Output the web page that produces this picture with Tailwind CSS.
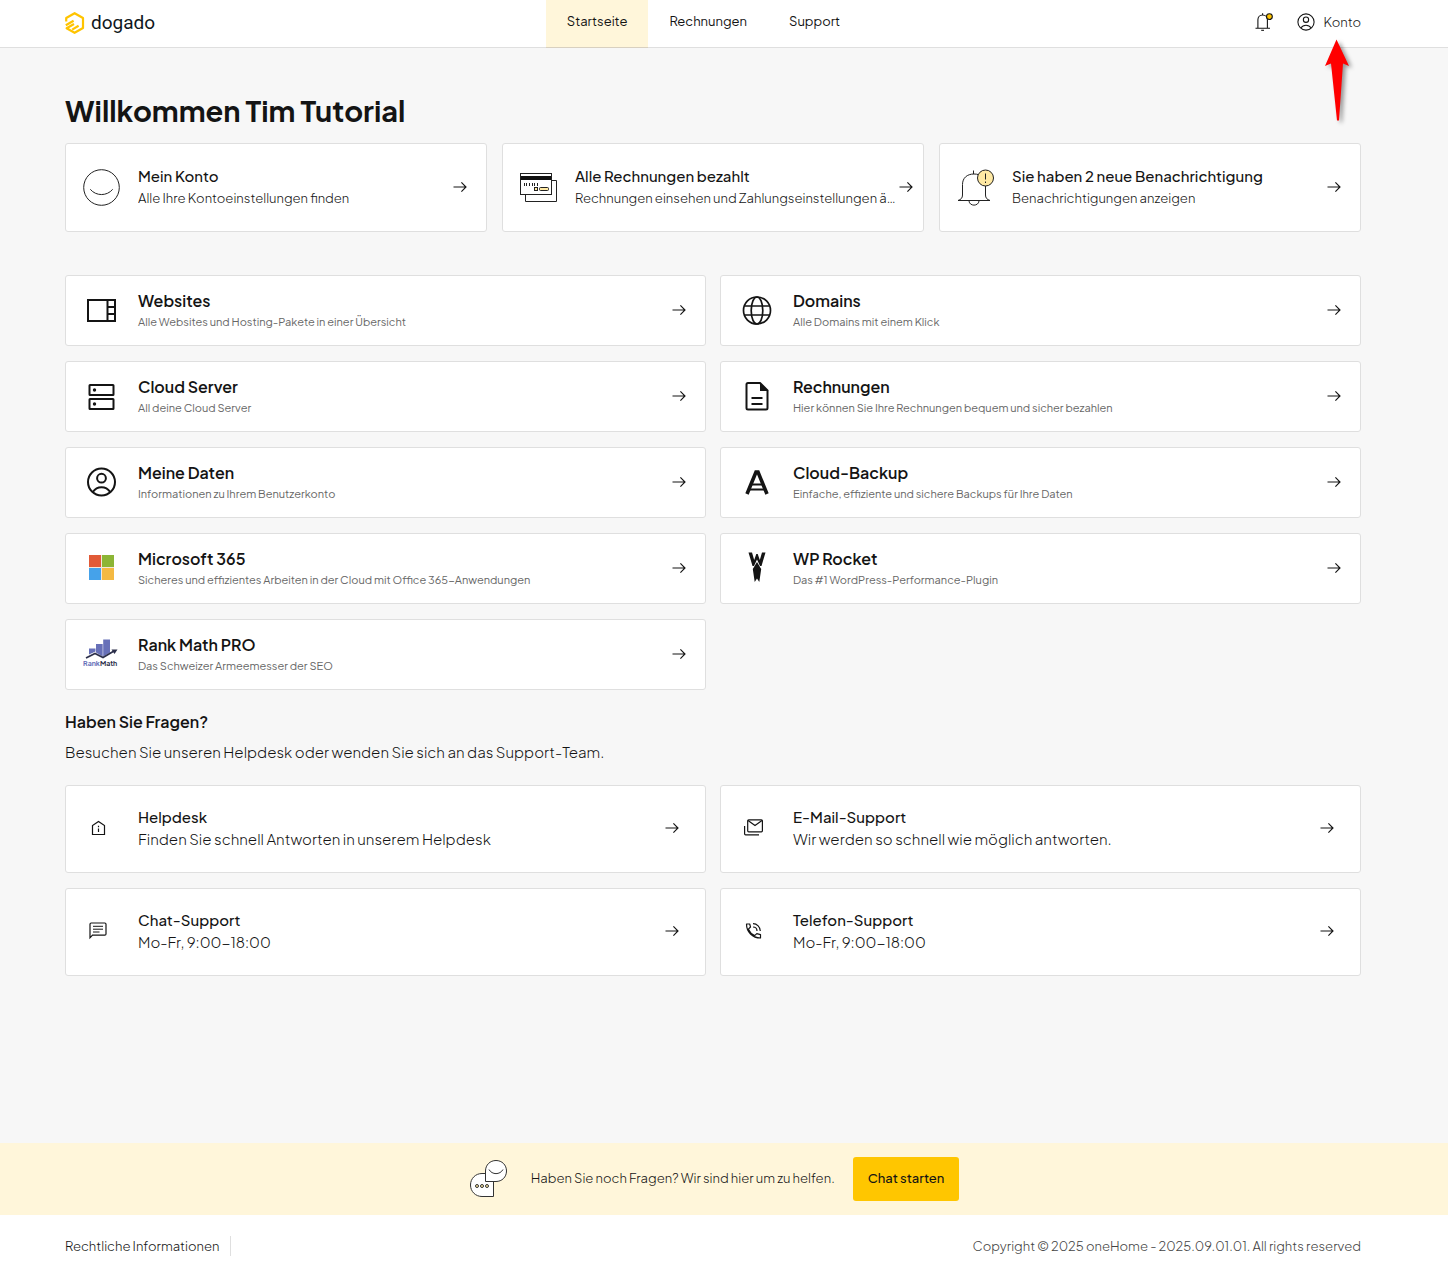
<!DOCTYPE html>
<html lang="de">

<head>
    <meta charset="UTF-8" />
    <meta name="viewport" content="width=device-width, initial-scale=1.0" />
    <title>Startseite - oneHome</title>
    <script src="https://cdn.jsdelivr.net/npm/@tailwindcss/browser@4"></script>
</head>

<body class="bg-[#f7f7f7] text-[#141414] min-h-screen flex flex-col font-['Plus_Jakarta_Sans','Inter',sans-serif]">

    <!-- Icons, die mehrfach vorkommen -->
    <svg class="hidden" aria-hidden="true">
        <symbol id="arrow" viewBox="0 0 14 14">
            <path d="M0.5 7H13M8.4 2.4L13 7L8.4 11.6" fill="none" stroke="currentColor" stroke-width="1.15" />
        </symbol>
        <symbol id="user" viewBox="0 0 30 30">
            <circle cx="15" cy="15" r="13.5" />
            <circle cx="15" cy="11.2" r="4.4" />
            <path d="M6.3 25C8.5 21.8 11.5 20.3 15 20.3S21.5 21.8 23.7 25" />
        </symbol>
    </svg>

    <!-- Kopfzeile -->
    <header class="bg-white border-b border-[#dfdfdf] h-12 pl-[65px] pr-[87px] grid grid-cols-[1fr_auto_1fr]">
        <a href="#" class="flex items-center gap-1.5 pb-0.5 font-['Roboto',sans-serif] text-[19px]/[24px] text-[#0f1720]">
            <svg class="w-5 h-6" viewBox="0 0 20 24" fill="none" stroke="#ffc400" stroke-width="2.2">
                <path d="M1.2 10.5V7L9.6 2.2L18 7V17L9.6 21.8L1.6 17.2L9 13" stroke-linejoin="round" />
                <path d="M0.8 14.2L8.6 9.8" />
                <path d="M7.2 18.6L13.6 14.8" />
            </svg>
            dogado
        </a>
        <nav class="flex mr-[19px] text-[13px]/[43px]">
            <a href="#" class="bg-[#fff6da] px-[21px] border-b border-[#d8d0c0] -mb-px">Startseite</a>
            <a href="#" class="px-[21px]">Rechnungen</a>
            <a href="#" class="px-[21px]">Support</a>
        </nav>
        <div class="flex items-center justify-end gap-6 pb-1">
            <button type="button" aria-label="Benachrichtigungen" class="cursor-pointer">
                <svg class="w-[18px] h-5" viewBox="0 0 18 20" fill="none" stroke="#141414" stroke-width="1.1">
                    <path d="M0.5 16.3H15M2.9 16V7.8C2.9 5 4.8 3 7.6 3S12.4 5 12.4 7.8V16M7.6 1.2V3" />
                    <path d="M6.2 18.3H9" />
                    <circle cx="14.4" cy="4.6" r="2.9" fill="#ffc400" />
                </svg>
            </button>
            <a href="#" class="flex items-center gap-2 text-[13px]/[20px] font-light">
                <svg class="w-[18px] h-[18px]" fill="none" stroke="#141414" stroke-width="1.8">
                    <use href="#user" />
                </svg>
                Konto
            </a>
        </div>
    </header>

    <!-- Markierung unter "Konto" -->
    <svg class="absolute right-[92px] top-[36px] w-[40px] h-[92px]" viewBox="0 0 40 92" aria-hidden="true">
        <path d="M20.5 3.5L33 30L27 27.5L23 84.5H21L15 27.5L9 30Z" fill="#ff0000" class="drop-shadow-[3px_2px_2px_rgba(0,0,0,0.4)]" />
    </svg>

    <main class="flex-1 pl-[65px] pr-[87px]">
        <h1 class="pt-[42px] mb-[13px] text-[29px]/[40px] font-bold">Willkommen Tim Tutorial</h1>

        <!-- Schnellzugriff -->
        <section class="grid grid-cols-3 gap-[15px]">
            <a href="#" class="flex items-center h-[89px] pl-[17px] pr-[19px] pb-px bg-white border border-[#dfdfdf] rounded-[3px]">
                <svg class="shrink-0 w-[37px] h-[37px]" viewBox="0 0 37 37" fill="none" stroke="#222">
                    <circle cx="18.5" cy="18.5" r="17.8" />
                    <path d="M7.3 20.3C13 27.3 24 27.3 29.7 20.3" />
                </svg>
                <div class="flex-1 min-w-0 ml-[18px]">
                    <h2 class="text-[15px]/[22px] font-medium">Mein Konto</h2>
                    <p class="text-[13px]/[22px] font-light truncate">Alle Ihre Kontoeinstellungen finden</p>
                </div>
                <svg class="shrink-0 ml-1 w-3.5 h-3.5"><use href="#arrow" /></svg>
            </a>
            <a href="#" class="flex items-center h-[89px] pl-[17px] pr-2.5 pb-px bg-white border border-[#dfdfdf] rounded-[3px]">
                <svg class="shrink-0 w-[37px] h-[37px]" viewBox="0 0 37 37" fill="none" stroke="#222">
                    <path d="M32 11.5H36.5V32.5H5.5V25.5" />
                    <rect x="0.5" y="4.5" width="31" height="21" fill="#fff" />
                    <path d="M1 9H31" stroke="#111" stroke-width="4" />
                    <path d="M4.5 14V17M6.5 14V17M9.5 14V17M12.5 14V17M14.5 14V17M17.5 14V17" />
                    <rect x="14.5" y="18.5" width="3" height="3" fill="#ffe9a3" />
                    <rect x="19.5" y="18.5" width="9" height="3" rx="1" fill="#ffe9a3" />
                </svg>
                <div class="flex-1 min-w-0 ml-[18px]">
                    <h2 class="text-[15px]/[22px] font-medium">Alle Rechnungen bezahlt</h2>
                    <p class="text-[13px]/[22px] font-light truncate">Rechnungen einsehen und Zahlungseinstellungen ändern</p>
                </div>
                <svg class="shrink-0 w-3.5 h-3.5"><use href="#arrow" /></svg>
            </a>
            <a href="#" class="flex items-center h-[89px] pl-[17px] pr-[19px] pb-px bg-white border border-[#dfdfdf] rounded-[3px]">
                <svg class="shrink-0 w-[37px] h-[37px]" viewBox="0 0 37 37" fill="none" stroke="#222">
                    <path d="M1 31.5H33M1 31.5C4 30.5 5.5 29 5.5 26V15.5C5.5 9 10 5 17 5S28.5 9 28.5 15.5V26C28.5 29 30 30.5 33 31.5M16.5 1.5V5" />
                    <path d="M12 32C12.5 37.5 21.5 37.5 22 32" />
                    <circle cx="28.5" cy="9" r="8" fill="#ffe9a3" />
                    <path d="M28.5 4.5V10.5M28.5 12.5V14" />
                </svg>
                <div class="flex-1 min-w-0 ml-[18px]">
                    <h2 class="text-[15px]/[22px] font-medium">Sie haben 2 neue Benachrichtigung</h2>
                    <p class="text-[13px]/[22px] font-light truncate">Benachrichtigungen anzeigen</p>
                </div>
                <svg class="shrink-0 ml-1 w-3.5 h-3.5"><use href="#arrow" /></svg>
            </a>
        </section>

        <!-- Produkte -->
        <section class="mt-[43px] grid grid-cols-2 gap-x-3.5 gap-y-[15px]">
            <a href="#" class="flex items-center h-[71px] pl-[17px] pr-[19px] pb-px bg-white border border-[#dfdfdf] rounded-[3px]">
                <svg class="shrink-0 w-[37px] h-[37px]" viewBox="0 0 37 37" fill="none" stroke="#141414" stroke-width="2">
                    <path d="M5 8H32V29H5ZM24.5 8V29M25 15H32M25 22H32" />
                </svg>
                <div class="flex-1 min-w-0 ml-[18px] pt-0.5">
                    <h2 class="text-[16px]/[20px] font-semibold">Websites</h2>
                    <p class="mt-px text-[11px]/[20px] text-[#666]">Alle Websites und Hosting-Pakete in einer Übersicht</p>
                </div>
                <svg class="shrink-0 ml-1 w-3.5 h-3.5"><use href="#arrow" /></svg>
            </a>
            <a href="#" class="flex items-center h-[71px] pl-[17px] pr-[19px] pb-px bg-white border border-[#dfdfdf] rounded-[3px]">
                <svg class="shrink-0 w-[37px] h-[37px]" viewBox="0 0 37 37" fill="none" stroke="#141414" stroke-width="1.7">
                    <circle cx="19" cy="18.5" r="13.5" />
                    <ellipse cx="19" cy="18.5" rx="5.8" ry="13.5" />
                    <path d="M6.5 14H31.5M6.5 23H31.5" />
                </svg>
                <div class="flex-1 min-w-0 ml-[18px] pt-0.5">
                    <h2 class="text-[16px]/[20px] font-semibold">Domains</h2>
                    <p class="mt-px text-[11px]/[20px] text-[#666]">Alle Domains mit einem Klick</p>
                </div>
                <svg class="shrink-0 ml-1 w-3.5 h-3.5"><use href="#arrow" /></svg>
            </a>
            <a href="#" class="flex items-center h-[71px] pl-[17px] pr-[19px] pb-px bg-white border border-[#dfdfdf] rounded-[3px]">
                <svg class="shrink-0 w-[37px] h-[37px]" viewBox="0 0 37 37" fill="none" stroke="#141414" stroke-width="2">
                    <rect x="6.5" y="7" width="24" height="10" rx="0.5" />
                    <rect x="6.5" y="21" width="24" height="10" rx="0.5" />
                    <circle cx="11.5" cy="12" r="1.7" fill="#141414" stroke="none" />
                    <circle cx="11.5" cy="26" r="1.7" fill="#141414" stroke="none" />
                </svg>
                <div class="flex-1 min-w-0 ml-[18px] pt-0.5">
                    <h2 class="text-[16px]/[20px] font-semibold">Cloud Server</h2>
                    <p class="mt-px text-[11px]/[20px] text-[#666]">All deine Cloud Server</p>
                </div>
                <svg class="shrink-0 ml-1 w-3.5 h-3.5"><use href="#arrow" /></svg>
            </a>
            <a href="#" class="flex items-center h-[71px] pl-[17px] pr-[19px] pb-px bg-white border border-[#dfdfdf] rounded-[3px]">
                <svg class="shrink-0 w-[37px] h-[37px]" viewBox="0 0 37 37" fill="none" stroke="#141414" stroke-width="2">
                    <path d="M22 5H10C9.2 5 8.5 5.7 8.5 6.5V30C8.5 30.800 9.2 31.500 10 31.500H28C28.800 31.500 29.500 30.800 29.500 30V12.500Z" stroke-linejoin="round" />
                    <path d="M22 4.500V13H30.500Z" fill="#141414" stroke="none" />
                    <path d="M13.500 20H24.500M13.500 26H24.500" />
                </svg>
                <div class="flex-1 min-w-0 ml-[18px] pt-0.5">
                    <h2 class="text-[16px]/[20px] font-semibold">Rechnungen</h2>
                    <p class="mt-px text-[11px]/[20px] text-[#666]">Hier können Sie Ihre Rechnungen bequem und sicher bezahlen</p>
                </div>
                <svg class="shrink-0 ml-1 w-3.5 h-3.5"><use href="#arrow" /></svg>
            </a>
            <a href="#" class="flex items-center h-[71px] pl-[17px] pr-[19px] pb-px bg-white border border-[#dfdfdf] rounded-[3px]">
                <svg class="shrink-0 w-[37px] h-[30px]" fill="none" stroke="#141414" stroke-width="2">
                    <use href="#user" />
                </svg>
                <div class="flex-1 min-w-0 ml-[18px] pt-0.5">
                    <h2 class="text-[16px]/[20px] font-semibold">Meine Daten</h2>
                    <p class="mt-px text-[11px]/[20px] text-[#666]">Informationen zu Ihrem Benutzerkonto</p>
                </div>
                <svg class="shrink-0 ml-1 w-3.5 h-3.5"><use href="#arrow" /></svg>
            </a>
            <a href="#" class="flex items-center h-[71px] pl-[17px] pr-[19px] pb-px bg-white border border-[#dfdfdf] rounded-[3px]">
                <!-- Logo mit doppeltem Querstrich -->
                <svg class="shrink-0 w-[37px] h-[37px]" viewBox="0 0 37 37" fill="none" stroke="#141414">
                    <path d="M9 30L18 8H20L29 30" stroke-width="3.6" />
                    <path d="M12.5 20.5H25.5M10.5 25.5H27.5" stroke-width="2" />
                </svg>
                <div class="flex-1 min-w-0 ml-[18px] pt-0.5">
                    <h2 class="text-[16px]/[20px] font-semibold">Cloud-Backup</h2>
                    <p class="mt-px text-[11px]/[20px] text-[#666]">Einfache, effiziente und sichere Backups für Ihre Daten</p>
                </div>
                <svg class="shrink-0 ml-1 w-3.5 h-3.5"><use href="#arrow" /></svg>
            </a>
            <a href="#" class="flex items-center h-[71px] pl-[17px] pr-[19px] pb-px bg-white border border-[#dfdfdf] rounded-[3px]">
                <svg class="shrink-0 w-[37px] h-[37px]" viewBox="0 0 37 37">
                    <rect x="6" y="5" width="25" height="25" fill="#f3e6d8" />
                    <rect x="6" y="5" width="12" height="12" fill="#e15a37" />
                    <rect x="19" y="5" width="12" height="12" fill="#8cb535" />
                    <rect x="6" y="18" width="12" height="12" fill="#45a2ea" />
                    <rect x="19" y="18" width="12" height="12" fill="#f4b942" />
                </svg>
                <div class="flex-1 min-w-0 ml-[18px] pt-0.5">
                    <h2 class="text-[16px]/[20px] font-semibold">Microsoft 365</h2>
                    <p class="mt-px text-[11px]/[20px] text-[#666]">Sicheres und effizientes Arbeiten in der Cloud mit Office 365-Anwendungen</p>
                </div>
                <svg class="shrink-0 ml-1 w-3.5 h-3.5"><use href="#arrow" /></svg>
            </a>
            <a href="#" class="flex items-center h-[71px] pl-[17px] pr-[19px] pb-px bg-white border border-[#dfdfdf] rounded-[3px]">
                <svg class="shrink-0 w-[37px] h-[37px]" viewBox="0 0 37 37" fill="#141414">
                    <path d="M10.5 2.5H14L16.2 10L18.3 4H19.7L21.8 10L24 2.5H27.5L23.5 16H22L19 9.5L16 16H14.5Z" />
                    <path d="M19 12L23.2 19L21.3 32L19 28.5L16.7 32L14.8 19Z" />
                </svg>
                <div class="flex-1 min-w-0 ml-[18px] pt-0.5">
                    <h2 class="text-[16px]/[20px] font-semibold">WP Rocket</h2>
                    <p class="mt-px text-[11px]/[20px] text-[#666]">Das #1 WordPress-Performance-Plugin</p>
                </div>
                <svg class="shrink-0 ml-1 w-3.5 h-3.5"><use href="#arrow" /></svg>
            </a>
            <a href="#" class="flex items-center h-[71px] pl-[17px] pr-[19px] pb-px bg-white border border-[#dfdfdf] rounded-[3px]">
                <svg class="shrink-0 w-[37px] h-[37px]" viewBox="0 0 37 37">
                    <path d="M6 12.5H12.5V15.5L6 18.5ZM13 8H19.7V20.5L13 16.5ZM20.2 3.5H27V16.5L20.2 20.5Z" fill="#6770b8" />
                    <path d="M3 22L12 17.5L20 21.5L31 15" fill="none" stroke="#2c2f4a" stroke-width="1.7" />
                    <path d="M28.5 13.5L34.5 13.5L31.5 18Z" fill="#2c2f4a" />
                    <text x="0" y="30" font-size="7" font-weight="700" fill="#2c2f4a"><tspan fill="#6770b8">Rank</tspan>Math</text>
                </svg>
                <div class="flex-1 min-w-0 ml-[18px] pt-0.5">
                    <h2 class="text-[16px]/[20px] font-semibold">Rank Math PRO</h2>
                    <p class="mt-px text-[11px]/[20px] text-[#666]">Das Schweizer Armeemesser der SEO</p>
                </div>
                <svg class="shrink-0 ml-1 w-3.5 h-3.5"><use href="#arrow" /></svg>
            </a>
        </section>

        <!-- Support -->
        <section class="mt-5">
            <h2 class="text-[16px]/[24px] font-semibold">Haben Sie Fragen?</h2>
            <p class="mt-1.5 text-[15px]/[24px] font-light">Besuchen Sie unseren Helpdesk oder wenden Sie sich an das Support-Team.</p>
            <div class="mt-[21px] grid grid-cols-2 gap-x-3.5 gap-y-[15px]">
                <a href="#" class="flex items-center h-[88px] pl-[23px] pr-[26px] pb-0.5 bg-white border border-[#dfdfdf] rounded-[3px]">
                    <svg class="shrink-0 w-[18px] h-[18px]" viewBox="0 0 18 18" fill="none" stroke="#141414" stroke-width="1.2">
                        <path d="M3.5 15.5V6.5L9.5 2.5L15.5 6.5V15.5Z" />
                        <path d="M9.5 9.5V13M9.5 6.8V8.2" />
                    </svg>
                    <div class="flex-1 min-w-0 ml-[31px]">
                        <h3 class="text-[15px]/[22px] font-medium">Helpdesk</h3>
                        <p class="text-[15px]/[22px] font-light">Finden Sie schnell Antworten in unserem Helpdesk</p>
                    </div>
                    <svg class="shrink-0 w-3.5 h-3.5"><use href="#arrow" /></svg>
                </a>
                <a href="#" class="flex items-center h-[88px] pl-[23px] pr-[26px] pb-0.5 bg-white border border-[#dfdfdf] rounded-[3px]">
                    <svg class="shrink-0 w-[19px] h-[18px]" viewBox="0 0 19 18" fill="none" stroke="#141414" stroke-width="1.2">
                        <rect x="3.7" y="0.8" width="14.7" height="12" rx="1" />
                        <path d="M4 1.5L11 6.5L18 1.5M0.6 7V14.8C0.6 15.4 1 15.8 1.6 15.8H15" />
                    </svg>
                    <div class="flex-1 min-w-0 ml-[30px]">
                        <h3 class="text-[15px]/[22px] font-medium">E-Mail-Support</h3>
                        <p class="text-[15px]/[22px] font-light">Wir werden so schnell wie möglich antworten.</p>
                    </div>
                    <svg class="shrink-0 w-3.5 h-3.5"><use href="#arrow" /></svg>
                </a>
                <a href="#" class="flex items-center h-[88px] pl-[23px] pr-[26px] pb-0.5 bg-white border border-[#dfdfdf] rounded-[3px]">
                    <svg class="shrink-0 w-[18px] h-[18px]" viewBox="0 0 18 18" fill="none" stroke="#141414" stroke-width="1.2">
                        <path d="M1 15.8V2.2C1 1.5 1.5 1 2.2 1H15.8C16.5 1 17 1.5 17 2.2V12C17 12.7 16.5 13.2 15.8 13.2H3.5Z" />
                        <path d="M4 4.3H14M4 7.2H14M4 10H10.5" stroke-width="1" />
                    </svg>
                    <div class="flex-1 min-w-0 ml-[31px]">
                        <h3 class="text-[15px]/[22px] font-medium">Chat-Support</h3>
                        <p class="text-[15px]/[22px] font-light">Mo-Fr, 9:00-18:00</p>
                    </div>
                    <svg class="shrink-0 w-3.5 h-3.5"><use href="#arrow" /></svg>
                </a>
                <a href="#" class="flex items-center h-[88px] pl-[23px] pr-[26px] pb-0.5 bg-white border border-[#dfdfdf] rounded-[3px]">
                    <svg class="shrink-0 w-[18px] h-[18px]" viewBox="0 0 18 18" fill="none" stroke="#141414" stroke-width="1.2">
                        <path d="M2.5 2H5.7L6.5 5L4.4 7.2C5.6 10 7.8 12.2 10.6 13.6L12.8 11.6L16.5 12.6V16C8.5 16 2.5 10 2.5 2Z" stroke-linejoin="round" />
                        <path d="M9 1.7C13 1.7 16.3 5 16.3 9M9 5C11.3 5 13 6.7 13 9" />
                    </svg>
                    <div class="flex-1 min-w-0 ml-[31px]">
                        <h3 class="text-[15px]/[22px] font-medium">Telefon-Support</h3>
                        <p class="text-[15px]/[22px] font-light">Mo-Fr, 9:00-18:00</p>
                    </div>
                    <svg class="shrink-0 w-3.5 h-3.5"><use href="#arrow" /></svg>
                </a>
            </div>
        </section>
    </main>

    <!-- Chat-Leiste -->
    <aside class="h-[72px] pr-[19px] bg-[#fff6da] flex items-center justify-center">
        <svg class="mb-0.5 w-[37px] h-[37px]" viewBox="0 0 37 37" fill="#fff" stroke="#333">
            <path d="M23.5 36.5H12C5.5 36.5 0.5 31.5 0.5 25S5.5 13.5 12 13.5H23.5Z" />
            <path d="M15.5 21.5V11C15.5 5 20 0.5 26 0.5S36.5 5 36.5 11S32 21.5 26 21.5Z" />
            <path d="M19 9.5C22 15 30 15 33 9.5" fill="none" />
            <g fill="#ffe9a3"><circle cx="7" cy="26" r="1.5" /><circle cx="12" cy="26" r="1.5" /><circle cx="17" cy="26" r="1.5" /></g>
        </svg>
        <p class="ml-6 mb-0.5 text-[13px]/[20px] font-light">Haben Sie noch Fragen? Wir sind hier um zu helfen.</p>
        <button type="button" class="ml-[18px] h-11 px-[15px] pb-0.5 bg-[#ffc600] rounded-[3px] text-[13px]/[20px] font-medium cursor-pointer">Chat starten</button>
    </aside>

    <footer class="h-[60px] pt-0.5 pl-[65px] pr-[87px] bg-white flex items-center justify-between text-[13px]/[20px] font-light">
        <a href="#" class="pr-2.5 border-r border-[#dfdfdf]">Rechtliche Informationen</a>
        <p class="text-[#444]">Copyright © 2025 oneHome - 2025.09.01.01. All rights reserved</p>
    </footer>

</body>

</html>
